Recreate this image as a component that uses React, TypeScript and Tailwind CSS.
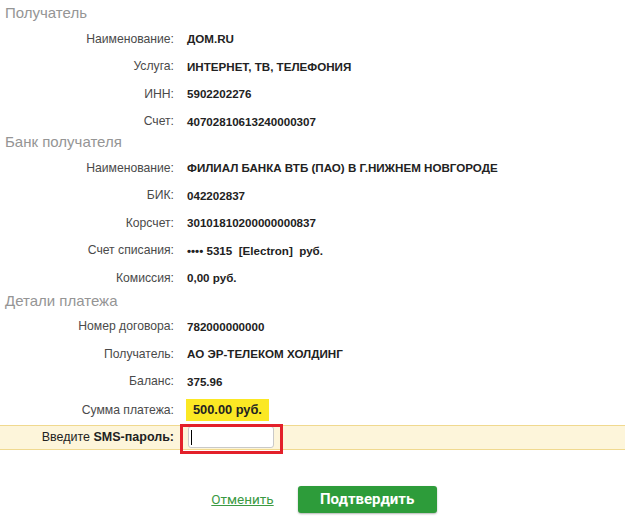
import React from "react";

type Row = { label: string; value: React.ReactNode; tall?: boolean };

const sections: { title: string; rows: Row[] }[] = [
  {
    title: "Получатель",
    rows: [
      { label: "Наименование:", value: "ДОМ.RU" },
      { label: "Услуга:", value: "ИНТЕРНЕТ, ТВ, ТЕЛЕФОНИЯ" },
      { label: "ИНН:", value: "5902202276" },
      { label: "Счет:", value: "40702810613240000307" },
    ],
  },
  {
    title: "Банк получателя",
    rows: [
      { label: "Наименование:", value: "ФИЛИАЛ БАНКА ВТБ (ПАО) В Г.НИЖНЕМ НОВГОРОДЕ" },
      { label: "БИК:", value: "042202837" },
      { label: "Корсчет:", value: "30101810200000000837" },
      { label: "Счет списания:", value: "•••• 5315  [Electron]  руб." },
      { label: "Комиссия:", value: "0,00 руб." },
    ],
  },
  {
    title: "Детали платежа",
    rows: [
      { label: "Номер договора:", value: "782000000000" },
      { label: "Получатель:", value: "АО ЭР-ТЕЛЕКОМ ХОЛДИНГ" },
      { label: "Баланс:", value: "375.96" },
      {
        label: "Сумма платежа:",
        tall: true,
        value: (
          <span className="-ml-px inline-block h-[22px] bg-[#fbe824] px-[7px] text-[12.8px] leading-[22px]">
            500.00 руб.
          </span>
        ),
      },
    ],
  },
];

function Field({ label, value, tall }: Row) {
  return (
    <div className={tall ? "flex h-[30px] items-center" : "flex h-[27.5px] items-center"}>
      <div className="w-[174px] shrink-0 text-right text-[12.2px] text-[#4a4a4a]">{label}</div>
      <div className="ml-[13px] whitespace-pre text-[11.6px] font-bold text-[#222]">{value}</div>
    </div>
  );
}

export default function App() {
  return (
    <div className="min-h-[520px] w-[625px] bg-white pt-[6px] font-['Liberation_Sans',Arial,sans-serif]">
      {sections.map((s, i) => (
        <section key={s.title} className={i === 2 ? "mt-[2px]" : ""}>
          <h2 className="mb-[5px] h-[14px] pl-[5px] text-[15px] leading-[14px] text-[#959595]">{s.title}</h2>
          {s.rows.map((r) => (
            <Field key={r.label} {...r} />
          ))}
        </section>
      ))}

      <div className="flex h-[25px] items-center border-y border-[#f0d98f] bg-[#fdf5da]">
        <div className="w-[174px] shrink-0 text-right text-[12.5px] text-[#222]">
          Введите <b>SMS-пароль:</b>
        </div>
        <div className="relative ml-[14px] h-[22px] w-[86px] self-start rounded-[3px] border border-[#c9c9c9] bg-white">
          <span className="absolute left-[2px] top-[3px] h-[15px] w-px bg-black" />
          <div className="absolute -left-[9px] -top-[3px] h-[30px] w-[103px] border-[3px] border-[#e3202a]" />
        </div>
      </div>

      <div className="mt-[36px] flex items-center justify-center gap-[24px] pl-[23px]">
        <a href="#" className="font-['Roboto',sans-serif] text-[13.5px] text-[#3b9a43] underline">
          Отменить
        </a>
        <button className="h-[27px] w-[139px] rounded-[3px] bg-[#2d9c3a] font-['Roboto',sans-serif] text-[15px] font-bold text-white shadow-[0_1px_2px_rgba(0,0,0,0.3)]">
          Подтвердить
        </button>
      </div>
    </div>
  );
}
